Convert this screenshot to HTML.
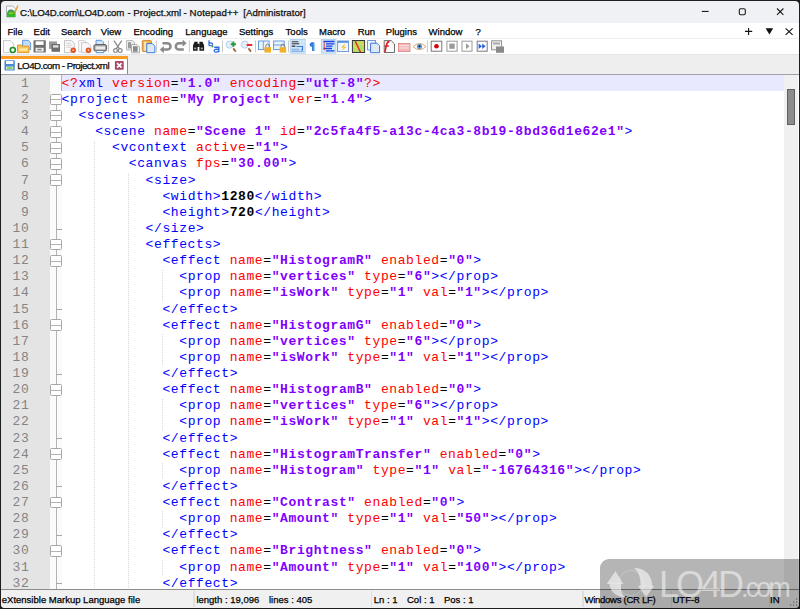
<!DOCTYPE html>
<html><head><meta charset="utf-8">
<style>
html,body{margin:0;padding:0;width:800px;height:609px;overflow:hidden;background:#1e1e1e;position:relative}
.a{position:absolute}
#win{position:absolute;left:1px;top:1px;width:798px;height:607px;background:#f0f1f4;border-radius:4px;overflow:hidden}
.ui{font-family:"Liberation Sans",sans-serif;color:#000;white-space:nowrap;line-height:1;-webkit-text-stroke:0.25px #000}
.tt{top:7.1px;font-size:9.7px;color:#1a1a1a}
#menu{left:0;top:21.5px;width:798px;height:16px;background:#fff}
#menu span{position:absolute;top:4.4px;font-size:9.5px;color:#000}
#tool{left:0;top:36.8px;width:798px;height:16.2px;background:#fff;border-top:1px solid #f0f0f0}
#tabs{left:0;top:53px;width:798px;height:19.5px;background:#eeeeee;border-top:1.5px solid #e4e4e4;box-sizing:border-box}
#tab{left:-1px;top:55px;width:127px;height:18px;background:#fff;border-right:1px solid #8a8a96}
#tabor{left:0;top:55px;width:126.5px;height:3px;background:#fb9b22}
#tabtxt{left:16.2px;top:60.4px;font-size:9.8px;letter-spacing:-0.55px;color:#111}
#edtop{left:0;top:72.5px;width:798px;height:1.5px;background:#a0a0aa}
#ed{left:0;top:74px;width:798px;height:515px;background:#fff;overflow:hidden}
#lnm{left:0;top:0;width:48.6px;height:515px;background:#e4e4e4}
#fm{left:48.6px;top:0;width:12px;height:515px;background-color:#f6f6f6;
 background-image:linear-gradient(45deg,#fff 25%,transparent 25%,transparent 75%,#fff 75%),linear-gradient(45deg,#fff 25%,transparent 25%,transparent 75%,#fff 75%);
 background-size:2px 2px;background-position:0 0,1px 1px}
#cur{left:60.5px;top:0.3px;width:723px;height:15.8px;background:#e8e8ff}
#caret{left:60.2px;top:0px;width:1px;height:16px;background:#b4a4f4}
#nums{left:0;top:0.75px;width:28.4px;text-align:right;font-family:"Liberation Mono",monospace;font-size:13px;letter-spacing:0.6px;line-height:16.12px;color:#858585}
#code{left:60.6px;top:0.75px;font-family:"Liberation Mono",monospace;font-size:13px;letter-spacing:0.6px;line-height:16.12px;white-space:pre;color:#000}
#code i{font-style:normal}
.b{color:#0000ff}.r{color:#ff0000}.v{color:#8000ff;font-weight:bold}.t{font-weight:bold}
.fb{position:absolute;left:49.1px;width:9.6px;height:9.6px;border:1px solid #a6a6a6;border-radius:1.5px;background:#fff;box-sizing:content-box}
.fb::after{content:"";position:absolute;left:0;right:0;top:4.6px;height:1px;background:#b4b4b4}
.fe{position:absolute;left:55px;width:5.5px;height:1px;background:#a8a8a8}
#fline{left:55px;top:26px;width:1px;height:489px;background:#b4b4b4}
.ig{position:absolute;width:1px;background-image:linear-gradient(#d8d8d8 50%,transparent 50%);background-size:1px 2px}
#sb{left:783px;top:0;width:14px;height:515px;background:#f0f0f0}
#thumb{left:785.6px;top:13.7px;width:6.7px;height:34px;background:#8c8c8c;border:1px solid #606060}
#status{left:0;top:587.8px;width:798px;height:19px;background:#f0f0f0;border-top:1.5px solid #8c8c8c;box-sizing:border-box}
#status span{position:absolute;top:5px;font-size:9.5px;color:#000}
.sep{position:absolute;top:1px;width:1.5px;height:16px;background:#dedede}
#wm{left:599.8px;top:559px;width:220px;height:60px;background:rgba(0,0,0,0.29);border-radius:9px}
#wmt{left:659px;top:566.7px;font-family:"Liberation Sans",sans-serif;font-size:36px;letter-spacing:-3px;line-height:1;color:rgba(255,255,255,0.5);white-space:nowrap}
#wmt small{font-size:27px;letter-spacing:-2.9px}
</style></head>
<body>
<div id="win">
  <div class="a ui tt" style="left:19.1px;letter-spacing:-0.18px">C:\LO4D.com\LO4D.com</div>
  <div class="a ui tt" style="left:126.4px">- Project.xml</div>
  <div class="a ui tt" style="left:182.4px;letter-spacing:0.12px">- Notepad++</div>
  <div class="a ui tt" style="left:242.3px">[Administrator]</div>
  <div class="a" id="menu">
    <span class="ui" style="left:6.4px">File</span>
    <span class="ui" style="left:32.6px">Edit</span>
    <span class="ui" style="left:60px">Search</span>
    <span class="ui" style="left:99.8px">View</span>
    <span class="ui" style="left:132.5px">Encoding</span>
    <span class="ui" style="left:184.3px">Language</span>
    <span class="ui" style="left:238px">Settings</span>
    <span class="ui" style="left:284.6px">Tools</span>
    <span class="ui" style="left:318px">Macro</span>
    <span class="ui" style="left:356.7px">Run</span>
    <span class="ui" style="left:384.8px">Plugins</span>
    <span class="ui" style="left:427.6px">Window</span>
    <span class="ui" style="left:474.5px">?</span>
  </div>
  <div class="a" id="tool"></div>
  <div class="a" id="tabs"></div>
  <div class="a" id="tab"></div>
  <div class="a" id="tabor"></div>
  <div class="a ui" id="tabtxt">LO4D.com - Project.xml</div>
  <div class="a" id="edtop"></div>
  <div class="a" id="ed">
    <div class="a" id="lnm"></div>
    <div class="a" id="fm"></div>
    <div class="a" id="fline"></div>
    <div class=fb style="top:18.78px"></div><div class=fb style="top:34.90px"></div><div class=fb style="top:51.02px"></div><div class=fb style="top:67.14px"></div><div class=fb style="top:83.26px"></div><div class=fb style="top:99.38px"></div><div class=fb style="top:163.86px"></div><div class=fb style="top:179.98px"></div><div class=fb style="top:244.46px"></div><div class=fb style="top:308.94px"></div><div class=fb style="top:373.42px"></div><div class=fb style="top:421.78px"></div><div class=fb style="top:470.14px"></div><div class=fe style="top:153.54px"></div><div class=fe style="top:234.14px"></div><div class=fe style="top:298.62px"></div><div class=fe style="top:363.10px"></div><div class=fe style="top:411.46px"></div><div class=fe style="top:459.82px"></div><div class=fe style="top:508.18px"></div><div class=ig style="left:93.40px;top:65.68px;height:451.36px"></div><div class=ig style="left:127.00px;top:97.92px;height:419.12px"></div><div class=ig style="left:160.60px;top:194.64px;height:32.24px"></div><div class=ig style="left:160.60px;top:259.12px;height:32.24px"></div><div class=ig style="left:160.60px;top:323.60px;height:32.24px"></div><div class=ig style="left:160.60px;top:388.08px;height:16.12px"></div><div class=ig style="left:160.60px;top:436.44px;height:16.12px"></div><div class=ig style="left:160.60px;top:484.80px;height:16.12px"></div>
    <div class="a" id="cur"></div>
    <div class="a" id="caret"></div>
    <div class="a" id="nums"><div>1</div>
<div>2</div>
<div>3</div>
<div>4</div>
<div>5</div>
<div>6</div>
<div>7</div>
<div>8</div>
<div>9</div>
<div>10</div>
<div>11</div>
<div>12</div>
<div>13</div>
<div>14</div>
<div>15</div>
<div>16</div>
<div>17</div>
<div>18</div>
<div>19</div>
<div>20</div>
<div>21</div>
<div>22</div>
<div>23</div>
<div>24</div>
<div>25</div>
<div>26</div>
<div>27</div>
<div>28</div>
<div>29</div>
<div>30</div>
<div>31</div>
<div>32</div></div>
    <div class="a" id="code"><div class=ln><i class=r>&lt;?</i><i class=b>xml</i> <i class=r>version</i>=<i class=v>"1.0"</i> <i class=r>encoding</i>=<i class=v>"utf-8"</i><i class=r>?&gt;</i></div><div class=ln><i class=b>&lt;</i><i class=b>project</i> <i class=r>name</i>=<i class=v>"My Project"</i> <i class=r>ver</i>=<i class=v>"1.4"</i><i class=b>&gt;</i></div><div class=ln>  <i class=b>&lt;</i><i class=b>scenes</i><i class=b>&gt;</i></div><div class=ln>    <i class=b>&lt;</i><i class=b>scene</i> <i class=r>name</i>=<i class=v>"Scene 1"</i> <i class=r>id</i>=<i class=v>"2c5fa4f5-a13c-4ca3-8b19-8bd36d1e62e1"</i><i class=b>&gt;</i></div><div class=ln>      <i class=b>&lt;</i><i class=b>vcontext</i> <i class=r>active</i>=<i class=v>"1"</i><i class=b>&gt;</i></div><div class=ln>        <i class=b>&lt;</i><i class=b>canvas</i> <i class=r>fps</i>=<i class=v>"30.00"</i><i class=b>&gt;</i></div><div class=ln>          <i class=b>&lt;</i><i class=b>size</i><i class=b>&gt;</i></div><div class=ln>            <i class=b>&lt;</i><i class=b>width</i><i class=b>&gt;</i><i class=t>1280</i><i class=b>&lt;/</i><i class=b>width</i><i class=b>&gt;</i></div><div class=ln>            <i class=b>&lt;</i><i class=b>height</i><i class=b>&gt;</i><i class=t>720</i><i class=b>&lt;/</i><i class=b>height</i><i class=b>&gt;</i></div><div class=ln>          <i class=b>&lt;/</i><i class=b>size</i><i class=b>&gt;</i></div><div class=ln>          <i class=b>&lt;</i><i class=b>effects</i><i class=b>&gt;</i></div><div class=ln>            <i class=b>&lt;</i><i class=b>effect</i> <i class=r>name</i>=<i class=v>"HistogramR"</i> <i class=r>enabled</i>=<i class=v>"0"</i><i class=b>&gt;</i></div><div class=ln>              <i class=b>&lt;</i><i class=b>prop</i> <i class=r>name</i>=<i class=v>"vertices"</i> <i class=r>type</i>=<i class=v>"6"</i><i class=b>&gt;</i><i class=b>&lt;/</i><i class=b>prop</i><i class=b>&gt;</i></div><div class=ln>              <i class=b>&lt;</i><i class=b>prop</i> <i class=r>name</i>=<i class=v>"isWork"</i> <i class=r>type</i>=<i class=v>"1"</i> <i class=r>val</i>=<i class=v>"1"</i><i class=b>&gt;</i><i class=b>&lt;/</i><i class=b>prop</i><i class=b>&gt;</i></div><div class=ln>            <i class=b>&lt;/</i><i class=b>effect</i><i class=b>&gt;</i></div><div class=ln>            <i class=b>&lt;</i><i class=b>effect</i> <i class=r>name</i>=<i class=v>"HistogramG"</i> <i class=r>enabled</i>=<i class=v>"0"</i><i class=b>&gt;</i></div><div class=ln>              <i class=b>&lt;</i><i class=b>prop</i> <i class=r>name</i>=<i class=v>"vertices"</i> <i class=r>type</i>=<i class=v>"6"</i><i class=b>&gt;</i><i class=b>&lt;/</i><i class=b>prop</i><i class=b>&gt;</i></div><div class=ln>              <i class=b>&lt;</i><i class=b>prop</i> <i class=r>name</i>=<i class=v>"isWork"</i> <i class=r>type</i>=<i class=v>"1"</i> <i class=r>val</i>=<i class=v>"1"</i><i class=b>&gt;</i><i class=b>&lt;/</i><i class=b>prop</i><i class=b>&gt;</i></div><div class=ln>            <i class=b>&lt;/</i><i class=b>effect</i><i class=b>&gt;</i></div><div class=ln>            <i class=b>&lt;</i><i class=b>effect</i> <i class=r>name</i>=<i class=v>"HistogramB"</i> <i class=r>enabled</i>=<i class=v>"0"</i><i class=b>&gt;</i></div><div class=ln>              <i class=b>&lt;</i><i class=b>prop</i> <i class=r>name</i>=<i class=v>"vertices"</i> <i class=r>type</i>=<i class=v>"6"</i><i class=b>&gt;</i><i class=b>&lt;/</i><i class=b>prop</i><i class=b>&gt;</i></div><div class=ln>              <i class=b>&lt;</i><i class=b>prop</i> <i class=r>name</i>=<i class=v>"isWork"</i> <i class=r>type</i>=<i class=v>"1"</i> <i class=r>val</i>=<i class=v>"1"</i><i class=b>&gt;</i><i class=b>&lt;/</i><i class=b>prop</i><i class=b>&gt;</i></div><div class=ln>            <i class=b>&lt;/</i><i class=b>effect</i><i class=b>&gt;</i></div><div class=ln>            <i class=b>&lt;</i><i class=b>effect</i> <i class=r>name</i>=<i class=v>"HistogramTransfer"</i> <i class=r>enabled</i>=<i class=v>"0"</i><i class=b>&gt;</i></div><div class=ln>              <i class=b>&lt;</i><i class=b>prop</i> <i class=r>name</i>=<i class=v>"Histogram"</i> <i class=r>type</i>=<i class=v>"1"</i> <i class=r>val</i>=<i class=v>"-16764316"</i><i class=b>&gt;</i><i class=b>&lt;/</i><i class=b>prop</i><i class=b>&gt;</i></div><div class=ln>            <i class=b>&lt;/</i><i class=b>effect</i><i class=b>&gt;</i></div><div class=ln>            <i class=b>&lt;</i><i class=b>effect</i> <i class=r>name</i>=<i class=v>"Contrast"</i> <i class=r>enabled</i>=<i class=v>"0"</i><i class=b>&gt;</i></div><div class=ln>              <i class=b>&lt;</i><i class=b>prop</i> <i class=r>name</i>=<i class=v>"Amount"</i> <i class=r>type</i>=<i class=v>"1"</i> <i class=r>val</i>=<i class=v>"50"</i><i class=b>&gt;</i><i class=b>&lt;/</i><i class=b>prop</i><i class=b>&gt;</i></div><div class=ln>            <i class=b>&lt;/</i><i class=b>effect</i><i class=b>&gt;</i></div><div class=ln>            <i class=b>&lt;</i><i class=b>effect</i> <i class=r>name</i>=<i class=v>"Brightness"</i> <i class=r>enabled</i>=<i class=v>"0"</i><i class=b>&gt;</i></div><div class=ln>              <i class=b>&lt;</i><i class=b>prop</i> <i class=r>name</i>=<i class=v>"Amount"</i> <i class=r>type</i>=<i class=v>"1"</i> <i class=r>val</i>=<i class=v>"100"</i><i class=b>&gt;</i><i class=b>&lt;/</i><i class=b>prop</i><i class=b>&gt;</i></div><div class=ln>            <i class=b>&lt;/</i><i class=b>effect</i><i class=b>&gt;</i></div></div>
    <div class="a" id="sb"></div>
    <div class="a" id="thumb"></div>
  </div>
  <div class="a" id="status">
    <span class="ui" style="left:0.8px">eXtensible Markup Language file</span>
    <div class="sep" style="left:192px"></div>
    <span class="ui" style="left:195.4px">length : 19,096</span>
    <span class="ui" style="left:268px">lines : 405</span>
    <div class="sep" style="left:369.5px"></div>
    <span class="ui" style="left:372.8px">Ln : 1</span>
    <span class="ui" style="left:406px">Col : 1</span>
    <span class="ui" style="left:443px">Pos : 1</span>
    <div class="sep" style="left:581px"></div>
    <span class="ui" style="left:583.5px;letter-spacing:-0.27px">Windows (CR LF)</span>
    <div class="sep" style="left:669.5px"></div>
    <span class="ui" style="left:671.5px">UTF-8</span>
    <div class="sep" style="left:767.5px"></div>
    <span class="ui" style="left:769px">IN</span>
  </div>
</div>
<svg class="a" style="left:0;top:0" width="800" height="609" viewBox="0 0 800 609">
<!-- title icon -->
<path d="M6.5 6h6.3l2.6 2.6v8.4h-8.9z" fill="#f7f7f7" stroke="#9a9a9a" stroke-width="0.7"/>
<path d="M7 12.3c2.2-3.2 5.5-3.2 8.2-0.8v5.5h-8.2z" fill="#2fb82a"/>
<path d="M8.2 11.2c1.5-1.6 3.6-1.6 5 0.2" fill="none" stroke="#5a6a9a" stroke-width="1"/>
<path d="M9 13.2h4" stroke="#c8d030" stroke-width="1"/>
<path d="M17.9 5.6L14.6 13.6" stroke="#e0a030" stroke-width="1.3"/>
<!-- window controls -->
<rect x="701.8" y="10.9" width="6.8" height="1.1" fill="#1a1a1a"/>
<rect x="739.3" y="8.7" width="6" height="6" rx="1.4" fill="none" stroke="#1a1a1a" stroke-width="1.1"/>
<path d="M777 8.5l6.4 6.4M783.4 8.5L777 14.9" stroke="#1a1a1a" stroke-width="1.1"/>
<!-- menu right -->
<path d="M745 31.4h7.2M748.6 27.9v7" stroke="#111" stroke-width="1.1"/>
<path d="M765.6 28.2h7.6l-3.8 6.3z" fill="#111"/>
<path d="M785.6 28.3l7 6.5M792.6 28.3l-7 6.5" stroke="#111" stroke-width="1.1"/>
<!-- toolbar -->
<path d="M3.5 40.6h7l3.2 3.2v8.8h-10.2z" fill="#fbfbfb" stroke="#bdbdbd" stroke-width="0.8"/>
<circle cx="12.8" cy="50" r="2.5" fill="#fff" stroke="#1f8f1f" stroke-width="1.6"/>
<path d="M22.6 40.3h5.6l2.4 2.4v6.8h-8z" fill="#c4dcf6" stroke="#4a8ad8" stroke-width="0.9"/>
<path d="M17.5 45h4l1 1.2h6.5v6.4h-11.5z" fill="#f6c65c" stroke="#e8901e" stroke-width="0.9"/>
<rect x="19" y="48.3" width="8.5" height="2.5" fill="#fde59a"/>
<rect x="33.5" y="40.3" width="12.3" height="12.3" rx="0.6" fill="#707070"/>
<rect x="35.6" y="41.3" width="8" height="3.6" fill="#fff"/>
<rect x="35.6" y="47.8" width="8" height="3.8" fill="#f4f4f4"/>
<rect x="37.2" y="48.8" width="4.5" height="1.6" fill="#888"/>
<rect x="49" y="41.4" width="8" height="7.5" fill="#999"/>
<rect x="51.5" y="44" width="8.5" height="7.8" fill="#6e6e6e"/>
<rect x="53" y="45.2" width="5.5" height="2.4" fill="#e0e0e0"/>
<path d="M64.5 40.6h7l3.2 3.2v8.8h-10.2z" fill="#f9f9f9" stroke="#b5b5b5" stroke-width="0.8"/>
<path d="M66.2 43.3h5M66.2 45.3h6.5M66.2 47.3h5" stroke="#c6c6c6" stroke-width="0.7"/>
<circle cx="73.2" cy="50.2" r="2.7" fill="#e2521c"/>
<rect x="72.4" y="49.4" width="1.6" height="1.6" fill="#fbd0b0"/>
<path d="M78.6 40.6h6l2.2 2.2v9h-8.2z" fill="#f9f9f9" stroke="#c0c0c0" stroke-width="0.7"/>
<path d="M81.6 42.7h6l3.2 3.2v6.8h-9.2z" fill="#f9f9f9" stroke="#b5b5b5" stroke-width="0.7"/>
<circle cx="88.4" cy="50.2" r="2.7" fill="#e2521c"/>
<rect x="87.6" y="49.4" width="1.6" height="1.6" fill="#fbd0b0"/>
<path d="M96 40.3h5.6l2 2v3h-7.6z" fill="#d2e5f9" stroke="#3a80d8" stroke-width="0.8"/>
<rect x="93.9" y="44.6" width="12.7" height="6.4" rx="1.6" fill="#a5a5a5" stroke="#505050" stroke-width="0.9"/>
<rect x="95.6" y="46.4" width="9.4" height="3" fill="#ececec"/>
<path d="M96.2 51v1.7h7.6V51" fill="#fff" stroke="#3a80d8" stroke-width="0.9"/>
<rect x="108.1" y="40.4" width="0.9" height="12" fill="#c4c4c4"/>
<path d="M121.8 40.6L116.2 48.8M113.9 40.6l5.6 8.2" stroke="#8a8a8a" stroke-width="1.3"/>
<circle cx="115.5" cy="50.6" r="1.9" fill="none" stroke="#8a8a8a" stroke-width="1.2"/>
<circle cx="120.2" cy="50.6" r="1.9" fill="none" stroke="#8a8a8a" stroke-width="1.2"/>
<path d="M126.5 40.5h6l2 2v7.5h-8z" fill="#ececec" stroke="#aaa" stroke-width="0.8"/>
<rect x="128" y="42.2" width="3" height="6.2" fill="#9a9a9a"/>
<path d="M131.5 44.5h5.5l2.5 2.5v5.8h-8z" fill="#f2f2f2" stroke="#9a9a9a" stroke-width="0.8"/>
<rect x="133" y="46.2" width="4.6" height="5.6" fill="#8a8a8a"/>
<rect x="142.3" y="40.4" width="9.1" height="11.2" rx="1" fill="#f1b04a" stroke="#c87a22" stroke-width="0.8"/>
<rect x="144" y="41.6" width="2.6" height="9" fill="#fbe2ac"/>
<path d="M146.8 43.6h5.5l2.6 2.6v6.5h-8.1z" fill="#dce9fb" stroke="#2a70d8" stroke-width="0.9"/>
<rect x="156.1" y="40.4" width="0.9" height="12" fill="#c4c4c4"/>
<path d="M162.5 43.2h4.8a3.2 3.2 0 0 1 0 6.4h-4.8" fill="none" stroke="#8a8a8a" stroke-width="2.5"/>
<path d="M159.8 49.6l4-3.6v7.2z" fill="#8a8a8a"/>
<path d="M183.8 43.2h-4.8a3.2 3.2 0 0 0 0 6.4h4.8" fill="none" stroke="#8a8a8a" stroke-width="2.5"/>
<path d="M186.6 43.2l-4-3.6v7.2z" fill="#8a8a8a"/>
<rect x="188.9" y="40.4" width="0.9" height="12" fill="#c4c4c4"/>
<path d="M193 45.4l1.5-3.6h3.1v9h-4.6z M199.4 41.8h3.1l1.6 3.6v5.4h-4.7z" fill="#1c1c1c"/>
<rect x="197" y="43.8" width="2.6" height="3.2" fill="#1c1c1c"/>
<rect x="194.2" y="47.6" width="2" height="1.6" fill="#b0b0b0"/>
<rect x="200.8" y="47.6" width="2" height="1.6" fill="#b0b0b0"/>
<path d="M209 40.3v5.4M209 43.6c2.2-1.5 3.8 0 3.6 1 -0.2 1.3-2 1.5-3.6 0.6" fill="none" stroke="#2a6ae0" stroke-width="1.2"/>
<path d="M214.2 47.3h4.6v5M218.8 49.5c-3-0.8-4.8 0.2-4.6 1.5 0.2 1.5 3 1.5 4.6 0.2" fill="none" stroke="#2a6ae0" stroke-width="1.4"/>
<circle cx="212.5" cy="46.5" r="1" fill="#40a030"/>
<rect x="222.1" y="40.4" width="0.9" height="12" fill="#c4c4c4"/>
<circle cx="229.6" cy="44.6" r="3.6" fill="#e2effb" stroke="#a8c8ea" stroke-width="0.8"/>
<path d="M233.2 48.4l2.6 3.2" stroke="#a06030" stroke-width="1.7"/>
<path d="M233.4 41.6v5.2M230.8 44.2h5.2" stroke="#2a9a2a" stroke-width="1.9"/>
<circle cx="244.8" cy="44.6" r="3.6" fill="#e2effb" stroke="#a8c8ea" stroke-width="0.8"/>
<path d="M248.4 48.4l2.6 3.2" stroke="#a06030" stroke-width="1.7"/>
<path d="M246.6 45h5.6" stroke="#e82020" stroke-width="1.9"/>
<rect x="255" y="40.4" width="0.9" height="12" fill="#c4c4c4"/>
<rect x="258.5" y="41" width="10.6" height="8.6" fill="#eaf2fc" stroke="#5a90d8" stroke-width="0.9"/>
<path d="M263.3 41v8.6" stroke="#5a90d8" stroke-width="0.8"/>
<path d="M265.8 47.4v-1.3a1.9 1.9 0 0 1 3.8 0v1.3" fill="none" stroke="#777" stroke-width="0.9"/>
<rect x="264.4" y="47.2" width="6.6" height="5.4" fill="#f0b02c"/>
<rect x="273.6" y="41" width="10.6" height="8.6" fill="#eaf2fc" stroke="#5a90d8" stroke-width="0.9"/>
<path d="M273.6 45h10.6" stroke="#5a90d8" stroke-width="0.8"/>
<path d="M281 47.4v-1.3a1.9 1.9 0 0 1 3.8 0v1.3" fill="none" stroke="#777" stroke-width="0.9"/>
<rect x="279.6" y="47.2" width="6.6" height="5.4" fill="#f0b02c"/>
<rect x="288.1" y="40.4" width="0.9" height="12" fill="#c4c4c4"/>
<rect x="290.2" y="39.4" width="15" height="13.8" fill="#cfe5f8" stroke="#a2cbef" stroke-width="0.7"/>
<path d="M291.8 41.8h6.5M291.8 43.8h7.5" stroke="#333" stroke-width="1"/>
<path d="M291.8 46.2h3.5" stroke="#222" stroke-width="1.2"/>
<path d="M296.5 46.5h6v3.5h-1.5" fill="none" stroke="#3a7ad8" stroke-width="1.2"/>
<path d="M291.5 49.5h7.5M291.5 51.3h12" stroke="#8ab6ea" stroke-width="1.3"/>
<path d="M311.2 42.7h2.8M312.6 42.7v8.2M313.9 42.7v8.2" stroke="#2a7ae0" stroke-width="1.1"/>
<path d="M311.6 42.7a2 2 0 0 0 0 4h0.8v-4z" fill="#2a7ae0"/>
<rect x="321.4" y="39.4" width="14.6" height="13.8" fill="#cfe5f8" stroke="#a2cbef" stroke-width="0.7"/>
<path d="M323.5 41.5h11M326 43.8h8.5M326 46.2h6.5M323.5 48.5h8.5M326 50.8h8.5" stroke="#1a40e0" stroke-width="1.3"/>
<path d="M324.2 42v8" stroke="#e03030" stroke-width="0.9"/>
<rect x="337.6" y="41" width="11" height="10.6" fill="#f3f7fd" stroke="#5a90d8" stroke-width="0.9"/>
<rect x="337.6" y="41" width="11" height="1.8" fill="#5a90d8"/>
<path d="M345.5 43.6l-4.6 3.8h3l-2.2 3.4 5-4h-3z" fill="#f0c020"/>
<rect x="352.4" y="40.5" width="12.2" height="12" fill="#b5dc6a" stroke="#383838" stroke-width="1"/>
<path d="M353.5 45.5l4 3M358.5 42.5l4.5 2.5" stroke="#f0d848" stroke-width="1.3"/>
<path d="M355.2 41.2l2.8 5.8 2.4 5" stroke="#e03020" stroke-width="1.5" fill="none"/>
<rect x="367.6" y="40.6" width="8" height="9.4" fill="#eef4fc" stroke="#4a80d0" stroke-width="0.8"/>
<path d="M370.6 43.2h6.4l2.6 2.6v6.9h-9z" fill="#dde9f8" stroke="#2a6ad0" stroke-width="0.9"/>
<path d="M384.2 40.6h7l3.3 3.3v8.6h-10.3z" fill="#fafafa" stroke="#484848" stroke-width="0.8"/>
<path d="M389.5 41.6c-2 -0.3-2.6 1.4-3.1 3.8l-1.6 6.8M384.6 46h4.2" stroke="#e02020" stroke-width="1.6" fill="none"/>
<rect x="398.4" y="43.4" width="11.6" height="8.2" fill="#f2b8b8" stroke="#e08484" stroke-width="0.8"/>
<path d="M399.2 45.6h10M399.2 48h10" stroke="#fde4e4" stroke-width="0.9"/>
<path d="M413 46.6q6.5-6.2 13 0q-6.5 6.2-13 0z" fill="#fff" stroke="#dca050" stroke-width="0.9"/>
<circle cx="419.5" cy="46.5" r="2.7" fill="#6aa0e0"/>
<circle cx="419.5" cy="46.3" r="1" fill="#111"/>
<rect x="426.9" y="40.4" width="0.9" height="12" fill="#c4c4c4"/>
<rect x="431.2" y="41.2" width="10.6" height="10" fill="#fff" stroke="#777" stroke-width="1"/>
<circle cx="436.5" cy="46.2" r="2.3" fill="#e00000"/>
<rect x="446.9" y="41.2" width="10.2" height="10" fill="#fff" stroke="#9a9a9a" stroke-width="1"/>
<rect x="449.3" y="43.6" width="5.4" height="5.2" fill="#9a9a9a"/>
<rect x="462" y="41.2" width="10" height="10" fill="#fff" stroke="#9a9a9a" stroke-width="1"/>
<path d="M466 43.2l3.5 3-3.5 3z" fill="#9a9a9a"/>
<rect x="477.2" y="41.2" width="10" height="10" fill="#fff" stroke="#7a7a7a" stroke-width="1"/>
<path d="M478.6 43.4l3.4 2.8-3.4 2.8zM482.2 43.4l3.4 2.8-3.4 2.8z" fill="#2a60e0"/>
<rect x="491.6" y="40.8" width="10" height="9" fill="#f0f0f0" stroke="#888" stroke-width="0.9"/>
<rect x="493" y="42.5" width="7" height="2" fill="#aaa"/>
<rect x="496" y="46.5" width="8" height="6.3" fill="#8a8a8a"/>
<!-- tab icons -->
<rect x="4.5" y="60.3" width="10.3" height="10.3" rx="0.8" fill="#4a88d8"/>
<rect x="6" y="61" width="7.3" height="3" fill="#fff"/>
<rect x="6" y="66.5" width="7.3" height="3" fill="#dcf2bc"/>
<rect x="7" y="67.3" width="5.2" height="1.4" fill="#70c040"/>
<rect x="114.9" y="61.1" width="8.8" height="8.6" rx="0.8" fill="#a84868"/>
<path d="M117 63.2l4.6 4.4M121.6 63.2l-4.6 4.4" stroke="#fff" stroke-width="1.6"/>
<!-- grip -->
<g fill="#8a8a8a"><rect x="796" y="598.5" width="1.2" height="1.2"/><rect x="793" y="601.5" width="1.2" height="1.2"/><rect x="796" y="601.5" width="1.2" height="1.2"/><rect x="790" y="604.5" width="1.2" height="1.2"/><rect x="793" y="604.5" width="1.2" height="1.2"/><rect x="796" y="604.5" width="1.2" height="1.2"/></g>

</svg>
<div class="a" id="wm"></div>
<svg class="a" style="left:0;top:0" width="800" height="609" viewBox="0 0 800 609">
<circle cx="631" cy="583" r="12.6" fill="none" stroke="rgba(255,255,255,0.22)" stroke-width="1"/>
<g fill="rgba(255,255,255,0.55)">
<path d="M606.7 584L623.4 584L615.5 570.9z"/>
<path d="M609.6 583.5C609.6 591 616 597.2 626 597.6C620.6 594.2 620.6 589 621.2 583.5z"/>
<path d="M637.8 585.7L654.4 585.7L646.1 597.1z"/>
<path d="M634 568C645.5 568 652.2 575.5 652.2 586.2L640.6 586.2C640.6 578.5 639.4 572.2 634 568z"/>
</g>
</svg>
<div class="a" id="wmt">LO4D<small>.com</small></div>
</body></html>
